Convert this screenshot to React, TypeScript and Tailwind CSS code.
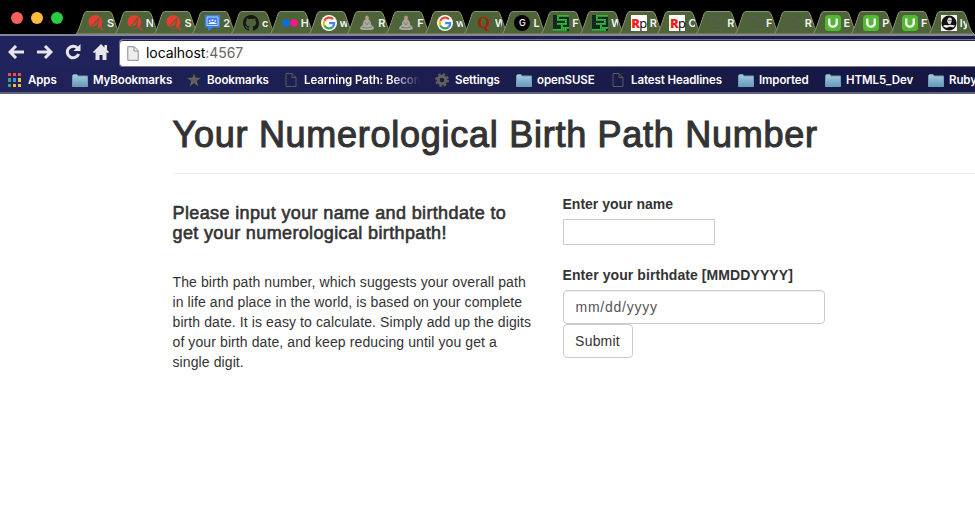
import type { ReactNode } from "react";

function TornadoIcon() {
  return (
    <svg width="17" height="17" viewBox="0 0 17 17">
      <circle cx="7.8" cy="7.8" r="7.4" fill="#e53d30" />
      <path d="M2 14 12.6 1.8 10.2 15Z" fill="#4f6339" />
      <path d="M4.2 13.2 10.8 5.6 9.3 11.4Z" fill="#e53d30" />
      <path d="M12.8 4 11.6 14.6M14.4 6 13.6 14.8 16.6 16.4" stroke="#e53d30" strokeWidth="1.1" fill="none" />
    </svg>
  );
}

function GroupsIcon() {
  return (
    <svg width="15" height="16" viewBox="0 0 15 16">
      <path d="M0 0h15v12.5H8L3 16v-3.5H0Z" fill="#3b7ded" />
      <path d="M2 2h11v8.5H2Z" fill="none" stroke="#b9d3ff" />
      <circle cx="4.7" cy="5.9" r=".8" fill="#fff" />
      <circle cx="7.5" cy="5.2" r="1" fill="#fff" />
      <circle cx="10.3" cy="5.9" r=".8" fill="#fff" />
      <path d="M3.3 8.9c0-2.2 8.4-2.2 8.4 0Z" fill="#fff" />
    </svg>
  );
}

function GithubIcon() {
  return (
    <svg width="16" height="16" viewBox="0 0 16 16">
      <path fill="#181717" d="M8 0C3.58 0 0 3.58 0 8c0 3.54 2.29 6.53 5.47 7.59.4.07.55-.17.55-.38 0-.19-.01-.82-.01-1.49-2.01.37-2.53-.49-2.69-.94-.09-.23-.48-.94-.82-1.13-.28-.15-.68-.52-.01-.53.63-.01 1.08.58 1.23.82.72 1.21 1.87.87 2.33.66.07-.52.28-.87.51-1.07-1.78-.2-3.64-.89-3.64-3.95 0-.87.31-1.59.82-2.15-.08-.2-.36-1.02.08-2.12 0 0 .67-.21 2.2.82A7.6 7.6 0 0 1 8 3.87c.68 0 1.36.09 2 .26 1.53-1.04 2.2-.82 2.2-.82.44 1.1.16 1.92.08 2.12.51.56.82 1.27.82 2.15 0 3.07-1.87 3.75-3.65 3.95.29.25.54.73.54 1.48 0 1.07-.01 1.93-.01 2.2 0 .21.15.46.55.38A8.01 8.01 0 0 0 16 8c0-4.42-3.58-8-8-8Z" />
    </svg>
  );
}

function FlickrIcon() {
  return (
    <svg width="16" height="16" viewBox="0 0 16 16">
      <circle cx="4" cy="8" r="3.8" fill="#0b6ce8" />
      <circle cx="12" cy="8" r="3.8" fill="#ff1688" />
    </svg>
  );
}

function GoogleIcon() {
  return (
    <svg width="16" height="16" viewBox="0 0 16 16">
      <circle cx="8" cy="8" r="8" fill="#fff" />
      <g fill="none" strokeWidth="2.2">
        <path d="M12 4.2A5.3 5.3 0 0 0 3.3 5.7" stroke="#ea4335" />
        <path d="M3.3 5.7a5.3 5.3 0 0 0 0 4.8" stroke="#fbbc05" />
        <path d="M3.3 10.5a5.3 5.3 0 0 0 8.2 1.6" stroke="#34a853" />
        <path d="M11.5 12.1A5.3 5.3 0 0 0 13.2 8.2H8.2" stroke="#4285f4" />
      </g>
    </svg>
  );
}

function MonkIcon() {
  return (
    <svg width="16" height="16" viewBox="0 0 16 16">
      <path d="M8 4.5c3 0 4 2 4 5l2.5 2.5.5 2-3 1H4l-3-1 .5-2L4 9.500c0-3 1-5 4-5Z" fill="#aaa9a2" />
      <ellipse cx="8" cy="2.900" rx="1.900" ry="2.500" fill="#b99a83" />
      <path d="M6 7l2 3 2-3M3 12l5 1 5-1" stroke="#747870" strokeWidth=".8" fill="none" />
      <path d="M6.500 11.500h3" stroke="#c9a78b" strokeWidth="1.200" />
    </svg>
  );
}

function QuoraIcon() {
  return (
    <span className="w-4 text-center font-['Liberation_Serif',serif] text-[16px] leading-4 font-bold text-[#a62100]">Q</span>
  );
}

function CircleGIcon() {
  return (
    <span className="flex size-4 items-center justify-center rounded-full bg-black font-[Inter,sans-serif] text-[9px] font-medium text-white">G</span>
  );
}

function GridIcon() {
  const lit = ["00111111", "00100000", "00111110", "00000010", "00111110", "00001000", "00001111", "11111110"];
  return (
    <svg width="16" height="16" viewBox="0 0 16 16">
      <rect width="16" height="16" fill="#2c4a2b" />
      {lit.flatMap((row, y) =>
        row.split("").map((cell, x) => (
          <rect key={`${x}-${y}`} x={x * 2} y={y * 2} width="1.8" height="1.7" fill={cell === "1" ? "#27c93a" : "#101c20"} />
        )),
      )}
    </svg>
  );
}

function RpIcon() {
  return (
    <span className="flex size-4 items-center justify-center bg-white font-['Open_Sans',sans-serif] text-[13px] leading-4 tracking-[-1px] text-black">
      <b className="font-extrabold text-[#fa1919]">R</b>p
    </span>
  );
}

function PageIcon() {
  return (
    <svg width="12" height="14" viewBox="0 0 12 14" fill="none" stroke="#5c5b5a">
      <path d="M1 .5h6l4 4v9H1ZM7 .5v4h4" />
    </svg>
  );
}

function UdemyIcon() {
  return (
    <svg width="16" height="16" viewBox="0 0 16 16">
      <rect width="16" height="16" rx="3.5" fill="#50b931" />
      <path d="M4.2 3.5v4.4c0 5 7.6 5 7.6 0V3.5" stroke="#fff" strokeWidth="2.4" fill="none" />
    </svg>
  );
}

function PortraitIcon() {
  return (
    <svg width="16" height="16" viewBox="0 0 16 16">
      <path d="M0 0h16v16H0Z" fill="#f6f6f6" />
      <circle cx="8" cy="8" r="7.6" fill="#111" />
      <path d="M7 3.500c2-2 4-.5 4 2L9.500 9H7.500L6 6Z" fill="#ddd" />
      <path d="M2 11c2-2 4 0 6-1s4 1 6 0l-1 2c-2 1-3-1-5 0s-4 1-6-1Z" fill="#eee" />
      <path d="M7.500 5.500h1m1 0h1" stroke="#222" />
    </svg>
  );
}

const tabs: [ReactNode, string][] = [
  [<TornadoIcon />, "S"],
  [<TornadoIcon />, "N"],
  [<TornadoIcon />, "S"],
  [<GroupsIcon />, "2"],
  [<GithubIcon />, "c"],
  [<FlickrIcon />, "H"],
  [<GoogleIcon />, "w"],
  [<MonkIcon />, "R"],
  [<MonkIcon />, "F"],
  [<GoogleIcon />, "w"],
  [<QuoraIcon />, "W"],
  [<CircleGIcon />, "L"],
  [<GridIcon />, "F"],
  [<GridIcon />, "W"],
  [<RpIcon />, "R"],
  [<RpIcon />, "C"],
  [<PageIcon />, "R"],
  [<PageIcon />, "F"],
  [<PageIcon />, "R"],
  [<UdemyIcon />, "E"],
  [<UdemyIcon />, "P"],
  [<UdemyIcon />, "F"],
  [<PortraitIcon />, "ly"],
];

function Tab({ icon, label }: { icon: ReactNode; label: string }) {
  return (
    <div className="relative h-[23px] w-[38.78px] shrink-0">
      <svg className="absolute top-0 left-0" width="45" height="23" viewBox="0 0 45 23">
        <path d="M0 23C2 22 6 9 8 3Q9 .5 11 .5H33Q35 .5 36 3C39 10 41 21 45 23Z" fill="#4f6339" stroke="#8a9474" />
      </svg>
      <div className="relative flex h-full items-center pl-3">
        <span className="flex w-4 shrink-0 justify-center">{icon}</span>
        <span className="mt-px ml-[3px] w-[7px] shrink-0 overflow-hidden text-[11px] leading-4 font-semibold text-[#f4f4f4]">{label}</span>
      </div>
    </div>
  );
}

function FolderIcon() {
  return (
    <svg width="16" height="13" viewBox="0 0 16 13">
      <defs>
        <linearGradient id="folder" x2="0" y2="1">
          <stop stopColor="#a9cbdc" />
          <stop offset="1" stopColor="#659abd" />
        </linearGradient>
      </defs>
      <path d="M.5 1.5 1.5.5H5l1 1.5h9.5V12.5H.5Z" fill="url(#folder)" stroke="#6f9db7" />
      <path d="M1 3.500h14" stroke="#9cc1d3" />
    </svg>
  );
}

function StarIcon() {
  return (
    <svg width="14" height="14" viewBox="0 0 16 15">
      <path d="m8 0 2 5h6l-4.700 3.700L13 15l-5-3.800L3 15l1.700-6.300L0 5h6Z" fill="#63605d" />
    </svg>
  );
}

function GearIcon() {
  return (
    <svg width="14" height="14" viewBox="0 0 14 14" fill="none" stroke="#63605d">
      <circle cx="7" cy="7" r="3.800" strokeWidth="3" />
      <circle cx="7" cy="7" r="5.900" strokeWidth="2" strokeDasharray="2.500 2.130" />
    </svg>
  );
}

function AppsIcon() {
  const colors = ["#ee5147", "#ee5147", "#ee5147", "#34a969", "#4589ef", "#f6bc2c", "#34a969", "#f6bc2c", "#f6bc2c"];
  return (
    <span className="grid grid-cols-3 gap-x-[2px] gap-y-[2px]">
      {colors.map((color, i) => (
        <span key={i} className="h-[3.4px] w-[3px]" style={{ backgroundColor: color }} />
      ))}
    </span>
  );
}

function Bookmark({ icon, iconBox, label, className }: { icon: ReactNode; iconBox: string; label: string; className: string }) {
  return (
    <div className={`flex shrink-0 items-center ${className}`}>
      <span className={`flex shrink-0 ${iconBox}`}>{icon}</span>
      <span className="whitespace-nowrap">{label}</span>
    </div>
  );
}

function Browser() {
  return (
    <header className="h-[94px] overflow-hidden bg-[#1d2055] font-[Inter,sans-serif]">
      <div className="flex h-[34px] items-end bg-black">
        <div className="flex h-full w-[76px] shrink-0 items-center gap-2 pt-0.5 pl-[11px]">
          <span className="size-3 rounded-full bg-[#fc605c]" />
          <span className="size-3 rounded-full bg-[#fdbc40]" />
          <span className="size-3 rounded-full bg-[#29cc42]" />
        </div>
        {tabs.map(([icon, label], i) => (
          <Tab key={i} icon={icon} label={label} />
        ))}
      </div>
      <div className="flex h-[33px] border-t-2 border-[#85869a] bg-linear-to-r from-[#21235c] to-[#171945]">
        <div className="flex w-[119px] shrink-0 items-center pt-px pl-2 text-[#e8e6ed]">
          <svg width="16" height="14" viewBox="0 0 16 14" fill="none" stroke="currentColor" strokeWidth="3">
            <path d="M16 7H2M8 1 2 7l6 6" />
          </svg>
          <svg className="ml-[13px]" width="16" height="14" viewBox="0 0 16 14" fill="none" stroke="currentColor" strokeWidth="3">
            <path d="M0 7h14M8 1l6 6-6 6" />
          </svg>
          <svg className="ml-3" width="16" height="16" viewBox="0 0 16 16">
            <path d="M12.5 4.200A5.800 5.800 0 1 0 13.600 10" fill="none" stroke="currentColor" strokeWidth="3" />
            <path d="M15.500 0v7H8.500Z" fill="currentColor" />
          </svg>
          <svg className="ml-3" width="16" height="16" viewBox="0 0 16 16" fill="currentColor">
            <path d="M8 0 0 8l1.300 1.300L2.500 8v8h4v-5h3v5h4V8l1.200 1.300L16 8l-2-2V1h-2.500v2.500Z" />
          </svg>
        </div>
        <div className="mt-[3px] flex h-[28px] grow items-center rounded-l border border-r-0 border-[#777797] bg-white shadow-[inset_0_1px_0_#292941]">
          <svg className="ml-[7px] shrink-0" width="12" height="15" viewBox="0 0 12 15">
            <path d="M.8.7h6.500l3.900 4v9.600H.8ZM7 1v4h4" fill="#eee" stroke="#8b8b8b" />
          </svg>
          <span className="ml-[7px] text-[14px] tracking-[-0.06px] text-black">
            localhost<span className="text-[#666]">:4567</span>
          </span>
        </div>
      </div>
      <div className="flex h-[27px] items-center border-b-2 border-[#60617b] bg-linear-to-r from-[#20235a] to-[#151741] pt-px text-[11.500px] font-semibold tracking-[-0.1px] text-white">
        <Bookmark icon={<AppsIcon />} iconBox="w-5" label="Apps" className="ml-2 w-[64px]" />
        <Bookmark icon={<FolderIcon />} iconBox="w-[21px]" label="MyBookmarks" className="w-[115px]" />
        <Bookmark icon={<StarIcon />} iconBox="w-5" label="Bookmarks" className="w-[98px]" />
        <div className="flex w-[150px] shrink-0 items-center">
          <span className="w-[19px] shrink-0"><PageIcon /></span>
          <span className="w-[116px] overflow-hidden mask-r-from-75% mask-r-to-100% whitespace-nowrap">Learning Path: Becom</span>
        </div>
        <Bookmark icon={<GearIcon />} iconBox="w-5" label="Settings" className="w-[81px]" />
        <Bookmark icon={<FolderIcon />} iconBox="w-[21px]" label="openSUSE" className="w-[96px]" />
        <Bookmark icon={<PageIcon />} iconBox="w-[19px]" label="Latest Headlines" className="w-[126px]" />
        <Bookmark icon={<FolderIcon />} iconBox="w-[21px]" label="Imported" className="w-[87px]" />
        <Bookmark icon={<FolderIcon />} iconBox="w-[21px]" label="HTML5_Dev" className="w-[103px]" />
        <Bookmark icon={<FolderIcon />} iconBox="w-[21px]" label="Ruby" className="" />
      </div>
    </header>
  );
}

export default function App() {
  return (
    <div className="h-[508px] w-[975px] overflow-hidden bg-white font-['Liberation_Sans',Arial,sans-serif] text-[14px] leading-5 text-[#333]">
      <Browser />
      <main className="pl-[172.5px]">
        <h1 className="pt-[21px] text-[36px] leading-[40px] tracking-[0.73px] whitespace-nowrap [-webkit-text-stroke:1.1px_#333]">Your Numerological Birth Path Number</h1>
        <hr className="mt-[18px] border-[#eee]" />
        <div className="flex">
          <section className="w-[390px] shrink-0 pt-[30px] pr-[30px]">
            <h4 className="text-[18px] leading-[19.8px] tracking-[0.37px] whitespace-nowrap [-webkit-text-stroke:0.6px_#333]">
              Please input your name and birthdate to<br />get your numerological birthpath!
            </h4>
            <p className="mt-[28px] tracking-[0.1px] whitespace-nowrap">
              The birth path number, which suggests your overall path<br />
              in life and place in the world, is based on your complete<br />
              birth date. It is easy to calculate. Simply add up the digits<br />
              of your birth date, and keep reducing until you get a<br />
              single digit.
            </p>
          </section>
          <form className="flex w-[262px] flex-col items-start pt-5" onSubmit={(event) => event.preventDefault()}>
            <label htmlFor="name" className="font-bold">Enter your name</label>
            <input id="name" className="mt-[5px] h-[26px] w-[152px] border border-[#ccc]" />
            <label htmlFor="date" className="mt-5 font-bold tracking-[0.08px]">Enter your birthdate [MMDDYYYY]</label>
            <input id="date" placeholder="mm/dd/yyyy" className="mt-[5px] h-[34px] w-full rounded border border-[#ccc] px-3 tracking-[0.75px] shadow-[inset_0_1px_1px_rgba(0,0,0,.075)] placeholder:text-[#555]" />
            <button className="h-[34px] w-[70px] rounded border border-[#ccc] tracking-[0.2px]">Submit</button>
          </form>
        </div>
      </main>
    </div>
  );
}
